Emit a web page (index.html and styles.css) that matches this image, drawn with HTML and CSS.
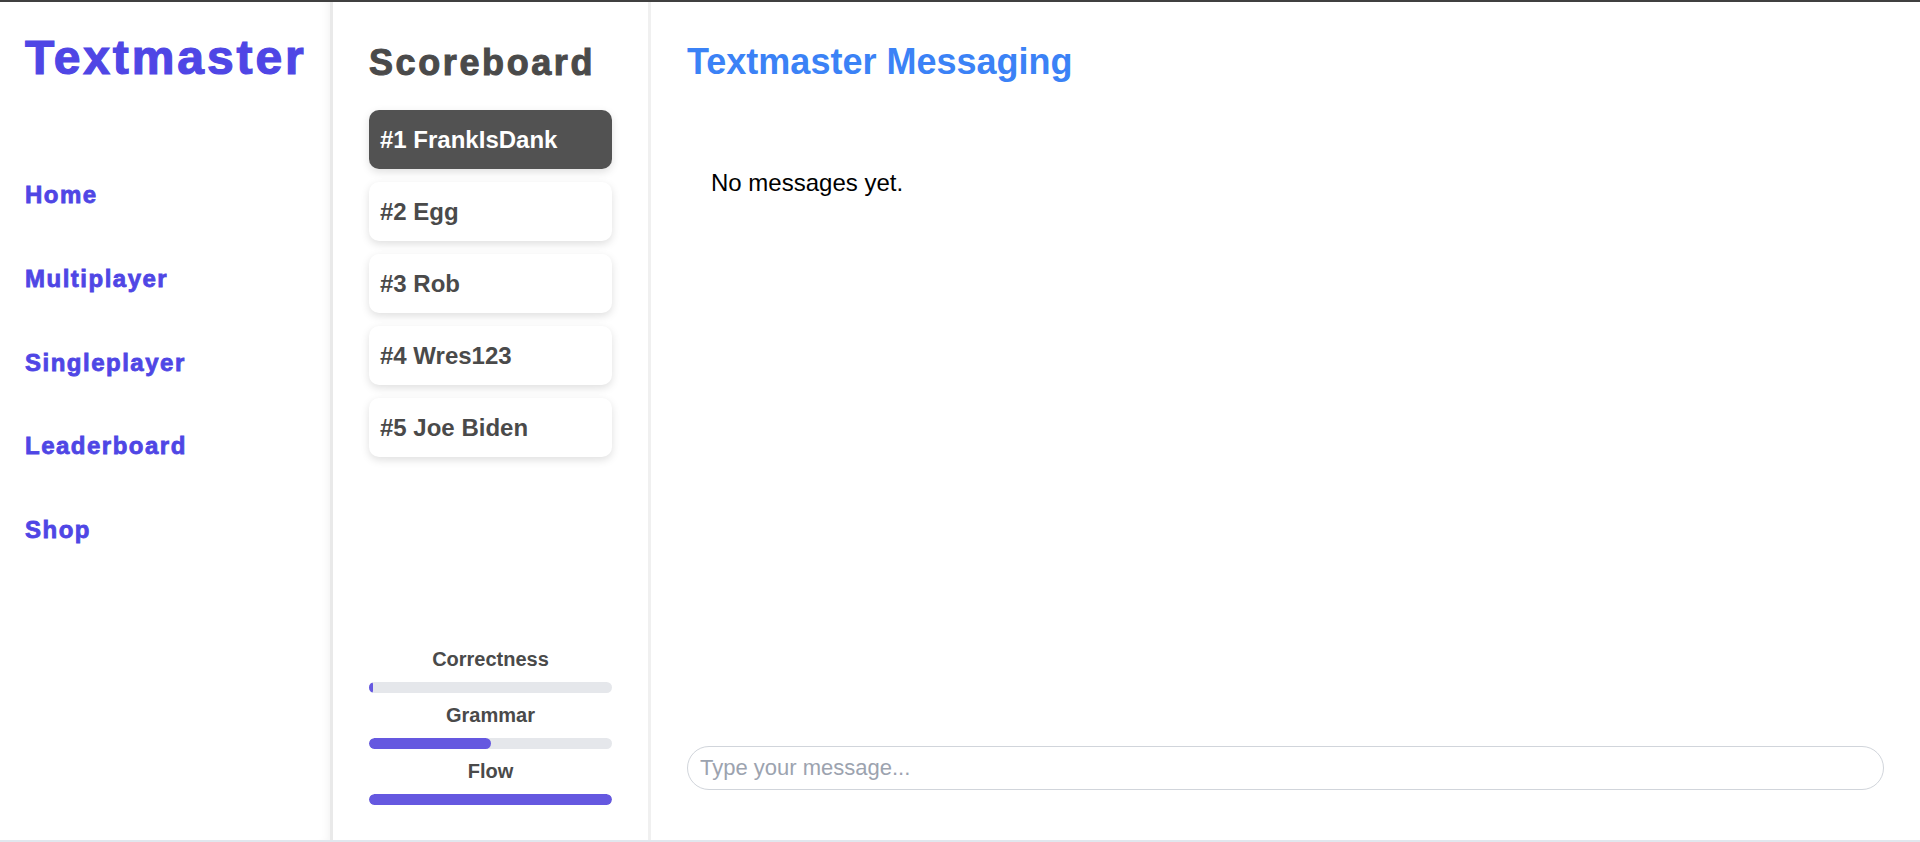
FILE: index.html
```html
<!DOCTYPE html>
<html>
<head>
  <link rel="stylesheet" href="styles.css">
</head>
<body>
  <div class="app">
    <!-- Sidebar -->
    <div class="sidebar">
      <div class="logo">Textmaster</div>
      <nav class="nav">
        <a href="#">Home</a>
        <a href="#">Multiplayer</a>
        <a href="#">Singleplayer</a>
        <a href="#">Leaderboard</a>
        <a href="#">Shop</a>
      </nav>
    </div>

    <!-- Scoreboard -->
    <div class="scoreboard">
      <h2>Scoreboard</h2>
      <div class="score-list">
        <div class="score-item first">#1 FrankIsDank</div>
        <div class="score-item">#2 Egg</div>
        <div class="score-item">#3 Rob</div>
        <div class="score-item">#4 Wres123</div>
        <div class="score-item">#5 Joe Biden</div>
      </div>

      <div class="stats">
        <div class="stat">
          <div class="stat-label">Correctness</div>
          <div class="bar"><div class="fill" style="width: 1.5%"></div></div>
        </div>
        <div class="stat">
          <div class="stat-label">Grammar</div>
          <div class="bar"><div class="fill" style="width: 50%"></div></div>
        </div>
        <div class="stat">
          <div class="stat-label">Flow</div>
          <div class="bar"><div class="fill" style="width: 100%"></div></div>
        </div>
      </div>
    </div>

    <!-- Messaging -->
    <div class="chat">
      <h1>Textmaster Messaging</h1>
      <div class="messages">
        <p>No messages yet.</p>
      </div>
      <input type="text" class="chat-input" placeholder="Type your message...">
    </div>
  </div>
</body>
</html>
```

FILE: styles.css
```css
html, body {
  height: 100%;
}

body {
  margin: 0;
  font-family: "Liberation Sans", Arial, sans-serif;
  border-top: 2px solid #404040;
  border-bottom: 2px solid #e1e7ee;
  box-sizing: border-box;
  background: #fff;
}

.app {
  display: flex;
  height: 100%;
}

.sidebar {
  width: 333px;
  flex-shrink: 0;
  padding: 28px 0 0 25px;
  box-sizing: border-box;
  border-right: 3px solid #e9e9e9;
  box-shadow: inset -8px 0 8px -6px rgba(0, 0, 0, 0.05);
}

.logo {
  font-size: 48px;
  font-weight: bold;
  color: #4f46e5;
  letter-spacing: 2.9px;
  -webkit-text-stroke: 1.2px #4f46e5;
}

.nav {
  display: flex;
  flex-direction: column;
  gap: 55.8px;
  margin-top: 96px;
}

.nav a {
  font-size: 24px;
  font-weight: bold;
  color: #4f46e5;
  text-decoration: none;
  letter-spacing: 1.5px;
  -webkit-text-stroke: 0.8px #4f46e5;
}

.scoreboard {
  width: 318px;
  flex-shrink: 0;
  display: flex;
  flex-direction: column;
  padding: 40px 36px 35px 36px;
  box-sizing: border-box;
  border-right: 3px solid #f0f0f0;
}

.scoreboard h2 {
  margin: 0 0 26px 0;
  font-size: 36px;
  color: #4a4a4a;
  letter-spacing: 2.6px;
  -webkit-text-stroke: 1px #4a4a4a;
}

.score-list {
  display: flex;
  flex-direction: column;
  gap: 13px;
}

.score-item {
  height: 59px;
  line-height: 59px;
  padding: 0 11px;
  font-size: 24px;
  font-weight: bold;
  color: #4a4a4a;
  background-color: #fff;
  border-radius: 10px;
  box-shadow: 0 3px 8px rgba(0, 0, 0, 0.13);
}

.score-item.first {
  background-color: #525252;
  color: #fff;
}

.stats {
  margin-top: auto;
  display: flex;
  flex-direction: column;
  gap: 11px;
}

.stat {
  display: flex;
  flex-direction: column;
  gap: 11px;
}

.stat-label {
  text-align: center;
  font-size: 20px;
  line-height: 23px;
  font-weight: bold;
  color: #4a4a4a;
}

.bar {
  height: 11px;
  background-color: #e5e7eb;
  border-radius: 6px;
  overflow: hidden;
}

.fill {
  height: 100%;
  background-color: #6558e0;
  border-radius: 6px;
}

.chat {
  flex: 1;
  display: flex;
  flex-direction: column;
  padding: 39px 36px 50px 36px;
  box-sizing: border-box;
}

.chat h1 {
  margin: 0;
  font-size: 36px;
  color: #3b82f6;
}

.messages {
  flex: 1;
  padding: 86px 24px 0 24px;
}

.messages p {
  margin: 0;
  font-size: 24px;
  color: #000;
}

.chat-input {
  height: 44px;
  box-sizing: border-box;
  padding: 0 12px;
  font-family: "Liberation Sans", Arial, sans-serif;
  font-size: 22px;
  border: 1px solid #d1d5db;
  border-radius: 22px;
  outline: none;
}

.chat-input::placeholder {
  color: #9ca3af;
}
```
